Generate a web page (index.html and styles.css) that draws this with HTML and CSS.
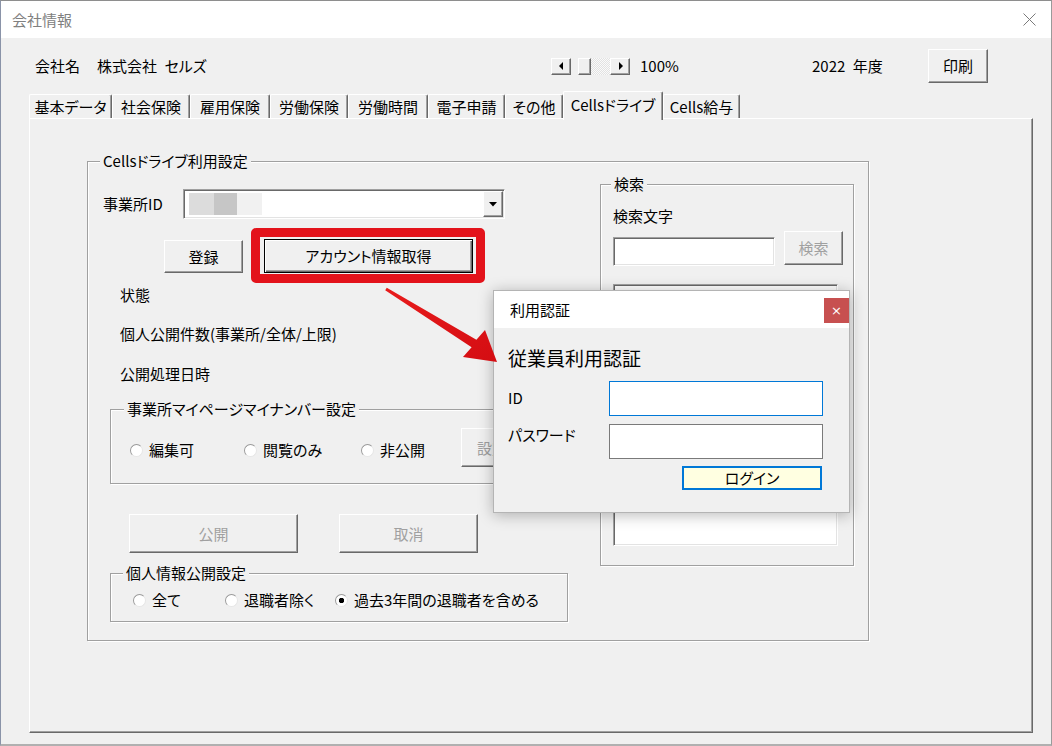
FILE: index.html
```html
<!DOCTYPE html>
<html lang="ja">
<head>
<meta charset="utf-8">
<title>会社情報</title>
<link rel="stylesheet" href="styles.css">
</head>
<body>
<div class="window">
  <div class="titlebar">
    <span class="title">会社情報</span>
    <svg class="title-close" width="13" height="13" viewBox="0 0 13 13"><path d="M0.5 0.5 L12.5 12.5 M12.5 0.5 L0.5 12.5" stroke="#7a7a7a" stroke-width="1" fill="none"/></svg>
  </div>

  <div class="toprow">
    <div class="company"><span class="company-label">会社名</span><span class="company-name">株式会社&ensp;セルズ</span></div>
    <div class="zoomctl">
      <span class="sb-btn"><svg width="5" height="8" viewBox="0 0 5 8"><path d="M4 0 L0 4 L4 8 Z" fill="#000"/></svg></span>
      <span class="sb-gap"></span>
      <span class="sb-thumb"></span>
      <span class="sb-track"></span>
      <span class="sb-btn"><svg width="5" height="8" viewBox="0 0 5 8"><path d="M1 0 L5 4 L1 8 Z" fill="#000"/></svg></span>
    </div>
    <span class="zoomval">100%</span>
    <span class="year">2022&ensp;年度</span>
    <button class="btn print">印刷</button>
  </div>

  <div class="tabs">
    <div class="tab t1">基本データ</div>
    <div class="tab t2">社会保険</div>
    <div class="tab t3">雇用保険</div>
    <div class="tab t4">労働保険</div>
    <div class="tab t5">労働時間</div>
    <div class="tab t6">電子申請</div>
    <div class="tab t7">その他</div>
    <div class="tab t8 active">Cellsドライブ</div>
    <div class="tab t9">Cells給与</div>
  </div>

  <div class="panel">
    <fieldset class="group main-group">
      <legend>Cellsドライブ利用設定</legend>
      <div class="main-cols">
        <div class="left-col">
          <div class="row-id">
            <span class="id-label">事業所ID</span>
            <div class="combo">
              <div class="redact"><span class="r1"></span><span class="r2"></span><span class="r3"></span></div>
              <span class="btn combo-btn"><svg width="8" height="5" viewBox="0 0 8 5"><path d="M0 0 L8 0 L4 4.5 Z" fill="#000"/></svg></span>
            </div>
          </div>
          <div class="row-actions">
            <button class="btn btn-register">登録</button>
            <button class="btn btn-default btn-account">アカウント情報取得</button>
          </div>
          <div class="info info1">状態</div>
          <div class="info info2">個人公開件数(事業所/全体/上限)</div>
          <div class="info info3">公開処理日時</div>

          <fieldset class="group mynumber-group">
            <legend>事業所マイページマイナンバー設定</legend>
            <div class="radio-row mn-row">
              <span class="rb rb-edit"><span class="radio"></span>編集可</span>
              <span class="rb rb-view"><span class="radio"></span>閲覧のみ</span>
              <span class="rb rb-hide"><span class="radio"></span>非公開</span>
              <button class="btn disabled btn-set">設定</button>
            </div>
          </fieldset>

          <div class="row-publish">
            <button class="btn disabled btn-publish">公開</button>
            <button class="btn disabled btn-cancel">取消</button>
          </div>

          <fieldset class="group personal-group">
            <legend>個人情報公開設定</legend>
            <div class="radio-row pg-row">
              <span class="rb rb-all"><span class="radio"></span>全て</span>
              <span class="rb rb-excl"><span class="radio"></span>退職者除く</span>
              <span class="rb"><span class="radio checked"></span>過去3年間の退職者を含める</span>
            </div>
          </fieldset>
        </div>

        <fieldset class="group search-group">
          <legend>検索</legend>
          <div class="search-label">検索文字</div>
          <div class="search-row">
            <div class="sunken search-input"></div>
            <button class="btn disabled search-btn">検索</button>
          </div>
          <div class="sunken listbox"></div>
        </fieldset>
      </div>
    </fieldset>
  </div>

  <div class="hl-frame"></div>

  <div class="dialog">
    <div class="dlg-title">
      <span>利用認証</span>
      <span class="dlg-close">×</span>
    </div>
    <div class="dlg-body">
      <div class="dlg-heading">従業員利用認証</div>
      <div class="dlg-form">
        <span class="dlg-label lbl-id">ID</span>
        <div class="dlg-input focus"></div>
        <span class="dlg-label lbl-pw">パスワード</span>
        <div class="dlg-input"></div>
        <button class="dlg-login">ログイン</button>
      </div>
    </div>
  </div>

  <svg class="annot" width="1052" height="746" viewBox="0 0 1052 746">
    <defs>
      <linearGradient id="ag" x1="0" y1="0" x2="1" y2="1">
        <stop offset="0" stop-color="#e81c1c"/>
        <stop offset="1" stop-color="#d40d12"/>
      </linearGradient>
    </defs>
    <polygon points="386.8,287.7 476.4,339.7 485,330 497,362 463,357 471.6,347.3 385.2,290.3" fill="url(#ag)"/>
  </svg>
</div>
</body>
</html>
```

FILE: styles.css
```css
* { box-sizing: border-box; }
html, body { margin: 0; padding: 0; }
body {
  width: 1052px;
  height: 746px;
  overflow: hidden;
  background: #f0f0f0;
  font-family: "Noto Sans CJK JP", "Noto Sans", sans-serif;
  font-size: 15px;
  line-height: 20px;
  color: #000;
  font-feature-settings: "palt";
}

.window {
  position: relative;
  width: 1052px;
  height: 746px;
  border-top: 1px solid #8e8e8e;
  border-left: 1px solid #8a93a8;
  border-right: 1px solid #9a9a9a;
  border-bottom: 2px solid #b0b0b0;
  background: #f0f0f0;
}

/* title bar */
.titlebar {
  height: 37px;
  background: #fff;
  display: flex;
  align-items: center;
  padding-left: 11px;
}
.title { color: #808080; }
.title-close { margin-left: auto; margin-right: 15px; }

/* top row */
.toprow {
  display: flex;
  align-items: center;
  height: 34px;
  margin-top: 11px;
  padding-left: 34px;
}
.company { width: 516px; display: flex; }
.company-name { margin-left: 17px; }
.zoomctl {
  display: flex;
  width: 79px;
  height: 17px;
  margin-right: 10px;
}
.sb-btn {
  width: 20px;
  height: 17px;
  background: #f0f0f0;
  border: 1px solid;
  border-color: #fff #696969 #696969 #fff;
  box-shadow: inset -1px -1px #a0a0a0;
  display: flex;
  align-items: center;
  justify-content: center;
}
.sb-gap { width: 7px; }
.sb-thumb {
  width: 13px;
  height: 17px;
  border: 1px solid;
  border-color: #fff #696969 #696969 #fff;
  box-shadow: inset -1px -1px #a0a0a0;
}
.sb-track {
  width: 19px;
  height: 17px;
  background: repeating-conic-gradient(#fafafa 0 25%, #e2e2e2 0 50%) 0 0 / 2px 2px;
}
.zoomval { width: 172px; }
.year { width: 116px; }

/* buttons */
.btn {
  font-family: inherit;
  font-size: 15px;
  line-height: 20px;
  color: #000;
  background: #f0f0f0;
  border: 1px solid;
  border-color: #fff #696969 #696969 #fff;
  box-shadow: inset -1px -1px #a0a0a0;
  padding: 0;
  display: flex;
  align-items: center;
  justify-content: center;
  font-feature-settings: "palt";
}
.btn.disabled { color: #a0a0a0; }
.btn-default {
  border: 1px solid #000;
  box-shadow: inset 1px 1px #fff, inset -1px -1px #696969, inset -2px -2px #a0a0a0;
}
.print { width: 60px; height: 34px; }

/* tabs */
.tabs {
  display: flex;
  align-items: flex-end;
  height: 27px;
  margin: 8px 0 0 28px;
  position: relative;
  z-index: 1;
}
.tab {
  height: 24px;
  background: #f0f0f0;
  border-top: 1px solid #fff;
  border-left: 1px solid #fff;
  border-right: 1px solid #696969;
  box-shadow: inset -1px 0 #a0a0a0;
  border-radius: 2px 2px 0 0;
  display: flex;
  align-items: center;
  justify-content: center;
  white-space: nowrap;
}
.t1 { width: 83px; }
.t2 { width: 78px; }
.t3 { width: 80px; }
.t4 { width: 78px; }
.t5 { width: 80px; }
.t6 { width: 77px; }
.t7 { width: 58px; }
.t8 { width: 100px; }
.t9 { width: 77px; }
.tab.active {
  height: 29px;
  margin-bottom: -2px;
  padding-bottom: 3px;
}

/* panel */
.panel {
  margin-left: 28px;
  width: 1004px;
  height: 615px;
  border-top: 1px solid #fff;
  border-left: 1px solid #fff;
  border-right: 1px solid #696969;
  border-bottom: 1px solid #696969;
  box-shadow: inset -1px -1px #a0a0a0;
  padding: 32px 0 0 57px;
}

/* group boxes */
.group {
  margin: 0;
  padding: 0;
  min-width: 0;
  border: 1px solid #a0a0a0;
  box-shadow: inset 1px 1px #fff, 1px 1px #fff;
}
.group > legend {
  margin-left: 12px;
  padding: 0 3px;
  line-height: 20px;
  background: #f0f0f0;
}
.main-group { width: 782px; height: 490px; }
.main-cols { display: flex; }
.left-col { width: 512px; }

.row-id {
  display: flex;
  align-items: center;
  margin-top: 18px;
  padding-left: 15px;
}
.id-label { width: 80px; }
.sunken {
  background: #fff;
  border: 1px solid;
  border-color: #a0a0a0 #fff #fff #a0a0a0;
  box-shadow: inset 1px 1px #696969, inset -1px -1px #e3e3e3;
}
.combo {
  width: 322px;
  height: 30px;
  display: flex;
  align-items: center;
  background: #fff;
  border: 1px solid;
  border-color: #a0a0a0 #fff #fff #a0a0a0;
  box-shadow: inset 1px 1px #696969, inset -1px -1px #e3e3e3;
}
.redact { display: flex; height: 22px; margin-left: 5px; }
.redact span { width: 25px; height: 22px; }
.redact .r1 { background: #dcdcdc; }
.redact .r2 { background: #c6c6c6; width: 23px; }
.redact .r3 { background: #f1f1f1; }
.combo-btn {
  margin-left: auto;
  margin-right: 1px;
  width: 20px;
  height: 26px;
}

.row-actions {
  display: flex;
  align-items: flex-start;
  gap: 21px;
  margin-top: 20px;
  padding-left: 76px;
}
.btn-register { width: 79px; height: 33px; margin-top: 1px; }
.btn-account { width: 209px; height: 34px; }

.info { padding-left: 32px; }
.info1 { margin-top: 12px; }
.info2 { margin-top: 19px; }
.info3 { margin-top: 20px; }

.mynumber-group {
  margin: 15px 0 0 22px;
  width: 450px;
  height: 85px;
}
.mynumber-group > legend { margin-left: 13px; }
.radio-row { display: flex; align-items: center; }
.mn-row { margin-top: 9px; padding-left: 19px; }
.rb { display: flex; align-items: center; white-space: nowrap; }
.mn-row .rb { margin-top: 5px; }
.rb-edit { width: 114px; }
.rb-view { width: 117px; }
.rb-hide { width: 100px; }
.btn-set { width: 62px; height: 39px; }
.radio {
  width: 13px;
  height: 13px;
  border-radius: 50%;
  border: 1px solid;
  border-color: #9a9a9a #e6e6e6 #e6e6e6 #9a9a9a;
  background: #fff;
  margin-right: 6px;
  flex: none;
}
.radio.checked { background: radial-gradient(circle, #000 0 2.4px, #fff 3px); }

.row-publish {
  display: flex;
  gap: 41px;
  margin-top: 30px;
  padding-left: 41px;
}
.btn-publish { width: 169px; height: 39px; }
.btn-cancel { width: 139px; height: 39px; }

.personal-group {
  margin: 10px 0 0 22px;
  width: 458px;
  height: 59px;
}
.pg-row { margin-top: 7px; padding-left: 22px; }
.rb-all { width: 92px; }
.rb-excl { width: 110px; }

/* search */
.search-group { width: 254px; height: 392px; margin-top: 3px; }
.search-group > legend { margin-left: 10px; }
.search-label { margin-top: 12px; padding-left: 12px; }
.search-row {
  display: flex;
  align-items: flex-start;
  gap: 9px;
  margin-top: 5px;
  padding-left: 12px;
}
.search-input { width: 162px; height: 29px; margin-top: 6px; }
.search-btn { width: 59px; height: 34px; }
.listbox { margin: 18px 0 0 12px; width: 225px; height: 262px; }

/* annotation frame */
.hl-frame {
  position: absolute;
  left: 250px;
  top: 227px;
  width: 234px;
  height: 55px;
  border: 9px solid #e3131b;
  border-radius: 5px;
}

/* dialog */
.dialog {
  position: absolute;
  left: 492px;
  top: 289px;
  width: 357px;
  height: 223px;
  background: #f0f0f0;
  border: 1px solid #b4b4b4;
  box-shadow: 0 2px 14px rgba(0, 0, 0, 0.28);
}
.dlg-title {
  height: 37px;
  background: #fff;
  display: flex;
  align-items: center;
  padding-left: 16px;
}
.dlg-close {
  margin-left: auto;
  align-self: flex-start;
  margin-top: 7px;
  width: 25px;
  height: 25px;
  background: #c75050;
  color: #fff;
  font-family: "DejaVu Sans", sans-serif;
  font-size: 13px;
  line-height: 25px;
  text-align: center;
}
.dlg-body { padding-left: 14px; }
.dlg-heading {
  margin-top: 18px;
  font-size: 19px;
  line-height: 24px;
}
.dlg-form {
  display: grid;
  grid-template-columns: 101px 214px;
  row-gap: 8px;
  margin-top: 11px;
}
.dlg-label { align-self: start; }
.lbl-id { padding-top: 7px; }
.lbl-pw { padding-top: 1px; }
.dlg-input {
  height: 35px;
  background: #fff;
  border: 1px solid #7a7a7a;
}
.dlg-input.focus { border-color: #0078d7; }
.dlg-login {
  grid-column: 2;
  justify-self: end;
  margin-right: 1px;
  margin-top: -1px;
  width: 140px;
  height: 24px;
  padding: 0;
  background: #ffffe1;
  border: 2px solid #0078d7;
  font-family: inherit;
  font-size: 15px;
  line-height: 18px;
  color: #000;
  font-feature-settings: "palt";
}

/* arrow overlay */
.annot {
  position: absolute;
  left: -1px;
  top: -1px;
  pointer-events: none;
}
```
